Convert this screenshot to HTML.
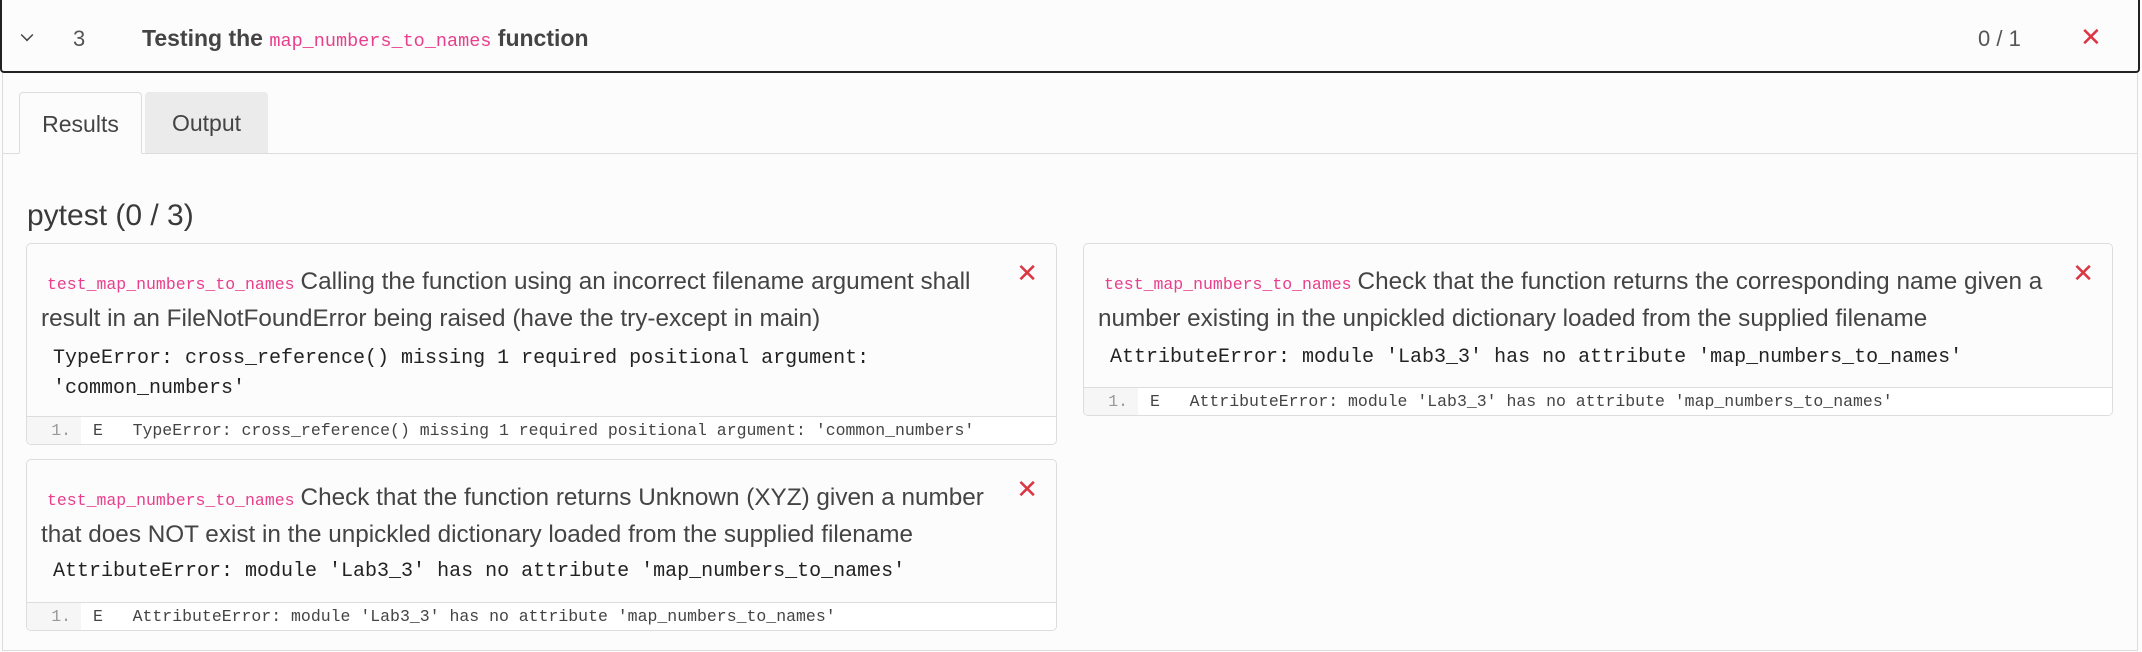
<!DOCTYPE html>
<html><head><meta charset="utf-8"><style>
*{box-sizing:border-box;margin:0;padding:0}
body{width:2142px;height:652px;background:#fcfcfc;font-family:"Liberation Sans",sans-serif;color:#444;position:relative;overflow:hidden}
.abs{position:absolute}
.mono{font-family:"Liberation Mono",monospace}
.header{left:0;top:0;width:2140px;height:73px;border:2px solid #222;border-top:none;border-radius:0 0 4px 4px;background:#fcfcfc}
.frame{left:2px;top:73px;width:2136px;height:578px;border:1px solid #ddd;border-top:none}
.tab{top:92px;height:62px;font-size:23px;line-height:62px;text-align:center;color:#444}
.card{border:1px solid #ddd;border-radius:5px;background:#fcfcfc;overflow:hidden}
.desc{position:absolute;left:14px;top:19px;width:965px;font-size:24.3px;line-height:37px;color:#444}
.desc code{font-family:"Liberation Mono",monospace;color:#e83e8c;font-size:16.5px;padding:0 6px;line-height:0}
.x{position:absolute;right:18px;top:14px;color:#dc3545;font-size:26px}
.err{position:absolute;left:26px;font-family:"Liberation Mono",monospace;font-size:20px;line-height:30px;color:#222;white-space:pre}
.foot{position:absolute;left:0;right:0;bottom:0;height:28px;border-top:1px solid #ddd;background:#fff;font-family:"Liberation Mono",monospace;font-size:16.5px;line-height:27px;color:#444;white-space:pre}
.gut{position:absolute;left:0;top:0;width:54px;height:100%;background:#f6f6f6;color:#999;text-align:right;padding-right:10px}
.ft{position:absolute;left:66px}
</style></head><body>
<div class="abs header"></div>
<div class="abs" style="left:21px;top:29px;width:12px;height:12px;border-right:2px solid #444;border-bottom:2px solid #444;transform:rotate(45deg) scale(.75)"></div>
<div class="abs" style="left:73px;top:26px;font-size:22px;color:#555">3</div>
<div class="abs" style="left:142px;top:25px;font-size:23px;font-weight:bold;color:#444">Testing the <span class="mono" style="color:#e83e8c;font-weight:normal;font-size:18.5px">map_numbers_to_names</span> function</div>
<div class="abs" style="left:1978px;top:26px;font-size:22px;color:#555">0 / 1</div>
<div class="abs" style="left:2080px;top:22px;font-size:26px;color:#dc3545">✕</div>
<div class="abs frame"></div>
<div class="abs" style="left:2px;top:153px;width:2136px;border-top:1px solid #ddd"></div>
<div class="abs tab" style="left:19px;width:123px;border:1px solid #ddd;border-bottom:1px solid #fcfcfc;border-radius:4px 4px 0 0;background:#fcfcfc">Results</div>
<div class="abs tab" style="left:145px;width:123px;background:#ebebeb;border-radius:4px 4px 0 0;height:61px">Output</div>
<div class="abs" style="left:27px;top:199px;font-size:30px;color:#3a3a3a">pytest (0 / 3)</div>

<div class="abs card" style="left:26px;top:243px;width:1031px;height:202px">
<div class="desc"><code>test_map_numbers_to_names</code>Calling the function using an incorrect filename argument shall result in an FileNotFoundError being raised (have the try-except in main)</div>
<div class="x">✕</div>
<div class="err" style="top:100px">TypeError: cross_reference() missing 1 required positional argument:
'common_numbers'</div>
<div class="foot"><div class="gut">1.</div><div class="ft">E   TypeError: cross_reference() missing 1 required positional argument: 'common_numbers'</div></div>
</div>

<div class="abs card" style="left:1083px;top:243px;width:1030px;height:173px">
<div class="desc"><code>test_map_numbers_to_names</code>Check that the function returns the corresponding name given a number existing in the unpickled dictionary loaded from the supplied filename</div>
<div class="x">✕</div>
<div class="err" style="top:99px">AttributeError: module 'Lab3_3' has no attribute 'map_numbers_to_names'</div>
<div class="foot"><div class="gut">1.</div><div class="ft">E   AttributeError: module 'Lab3_3' has no attribute 'map_numbers_to_names'</div></div>
</div>

<div class="abs card" style="left:26px;top:459px;width:1031px;height:172px">
<div class="desc"><code>test_map_numbers_to_names</code>Check that the function returns Unknown (XYZ) given a number that does NOT exist in the unpickled dictionary loaded from the supplied filename</div>
<div class="x">✕</div>
<div class="err" style="top:97px">AttributeError: module 'Lab3_3' has no attribute 'map_numbers_to_names'</div>
<div class="foot"><div class="gut">1.</div><div class="ft">E   AttributeError: module 'Lab3_3' has no attribute 'map_numbers_to_names'</div></div>
</div>
</body></html>
